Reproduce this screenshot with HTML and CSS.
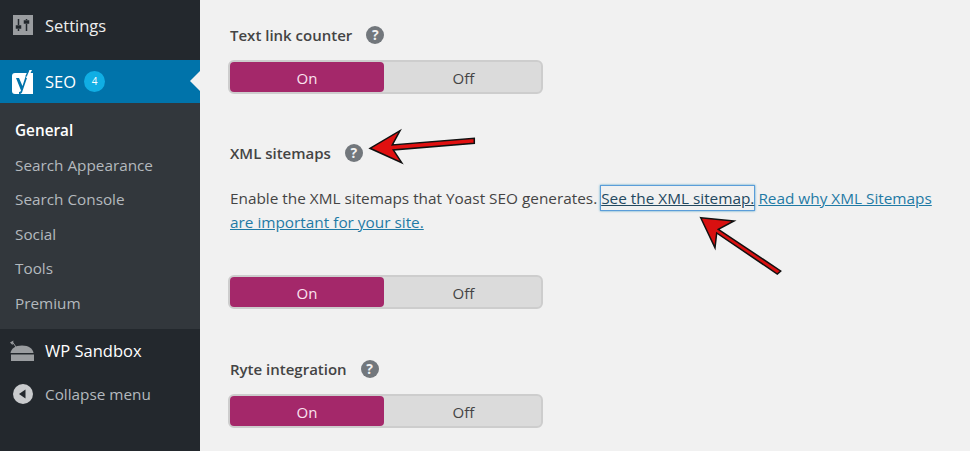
FILE: index.html
```html
<!DOCTYPE html>
<html lang="en">

<head>
    <meta charset="UTF-8">
    <meta name="viewport" content="width=device-width, initial-scale=1.0">
    <title>Yoast SEO - General</title>
    <link rel="stylesheet" href="styles.css">
</head>

<body>
    <div class="page">
        <nav class="sidebar">
            <a class="menu-item menu-settings">
                <svg class="menu-icon" viewBox="0 0 20 20" width="20" height="20">
                    <rect x="0" y="0" width="20" height="20" fill="#9a9da0"/>
                    <path d="M5.500 4v6M5.500 14v2M3.500 11h4v2h-4zM13.500 4v1M13.500 9v7M11.500 6h4v2h-4z" stroke="#23282d" stroke-width="1.500" fill="#23282d"/>
                </svg>
                <span>Settings</span>
            </a>
            <a class="menu-item menu-current">
                <svg class="menu-icon" viewBox="0 0 22 24" width="22" height="24">
                    <path d="M3 3h14l4-0v21H3a3 3 0 0 1-3-3V6a3 3 0 0 1 3-3z" fill="#fff"/>
                    <path d="M4 8h3l3.500 8L14 5h2L10 22.500q-.8 1.500-3 1.500v-2q1.500 0 2-1.500z" fill="#0073aa"/>
                    <path d="M17 0h3l-4 8h-2z" fill="#fff"/>
                    <path d="M16 0h1.500L15 6h-1.500z" fill="#0073aa"/>
                </svg>
                <span>SEO</span>
                <span class="badge">4</span>
                <i class="current-arrow"></i>
            </a>
            <ul class="submenu">
                <li class="submenu-active">General</li>
                <li>Search Appearance</li>
                <li>Search Console</li>
                <li>Social</li>
                <li>Tools</li>
                <li>Premium</li>
            </ul>
            <a class="menu-item menu-sandbox">
                <svg class="menu-icon" viewBox="0 0 24 22" width="24" height="22">
                    <path d="M2.500 6 0 3.500 3.500 1.500z" fill="#9a9da0"/>
                    <path d="M2.500 3 6 8" stroke="#9a9da0" stroke-width="1"/>
                    <path d="M0.500 14c.5-4 4.500-7.500 11.500-7.500S23 10 23.500 14z" fill="#9a9da0"/>
                    <rect x="1" y="15.500" width="23" height="6.500" fill="#9a9da0"/>
                </svg>
                <span>WP Sandbox</span>
            </a>
            <a class="menu-item menu-collapse">
                <svg class="menu-icon" viewBox="0 0 20 20" width="20" height="20">
                    <circle cx="10" cy="10" r="10" fill="#c9cbcd"/>
                    <path d="M12.500 5.500v9L6 10z" fill="#23282d"/>
                </svg>
                <span>Collapse menu</span>
            </a>
        </nav>

        <main class="content">
            <section class="setting setting-links">
                <h4 class="setting-title">Text link counter <i class="help">?</i></h4>
                <div class="toggle"><span class="toggle-on">On</span><span class="toggle-off">Off</span></div>
            </section>

            <section class="setting setting-sitemaps">
                <h4 class="setting-title">XML sitemaps <i class="help">?</i></h4>
                <p class="setting-desc">
                    <span class="desc-line"><span>Enable the XML sitemaps that Yoast SEO generates.</span> <a class="link link-focus">See the XML sitemap.</a> <a class="link">Read why XML Sitemaps</a></span>
                    <span class="desc-line"><a class="link">are important for your site.</a></span>
                </p>
                <div class="toggle"><span class="toggle-on">On</span><span class="toggle-off">Off</span></div>
            </section>

            <section class="setting setting-ryte">
                <h4 class="setting-title">Ryte integration <i class="help">?</i></h4>
                <div class="toggle"><span class="toggle-on">On</span><span class="toggle-off">Off</span></div>
            </section>
        </main>

        <!-- red arrows drawn over the screenshot -->
        <svg class="arrow arrow-help" viewBox="0 0 110 38" width="110" height="38">
            <path d="M3 20.300 33 2.700 25.300 17 107.300 10.300 107.300 15.300 26.300 22 34.700 34.700z" fill="#e01010" stroke="#111" stroke-width="1.500"/>
        </svg>
        <svg class="arrow arrow-link" viewBox="0 0 86 62" width="86" height="62">
            <path d="M2.700 2.700 36 6 20.300 14.300 82.700 56 79.300 59 18.700 18 17 32.700z" fill="#d81010" stroke="#111" stroke-width="1.500"/>
        </svg>
    </div>
</body>

</html>
```

FILE: styles.css
```css
html,
body {
    margin: 0;
    padding: 0;
    height: 100%;
    overflow: hidden;
}

body {
    font-family: "Open Sans", Arial, sans-serif;
    font-size: 15px;
    color: #444;
    background-color: #f1f1f1;
}

.page {
    position: relative;
    display: flex;
    width: 970px;
    height: 451px;
    overflow: hidden;
}

.sidebar {
    flex: 0 0 200px;
    background: #23282d;
    color: #eee;
}

.menu-item {
    display: flex;
    align-items: center;
    position: relative;
    font-size: 16.500px;
    color: #eee;
}

.menu-icon {
    flex: 0 0 auto;
}

.menu-settings {
    height: 60px;
    padding: 0 0 10px 13px;
    box-sizing: border-box;
    gap: 12px;
}

.menu-current {
    height: 43px;
    padding-left: 12px;
    background: #0073aa;
    color: #fff;
    gap: 11px;
}

.badge {
    width: 21px;
    height: 21px;
    margin-left: -3px;
    border-radius: 50%;
    background: #10aee4;
    color: #fff;
    font-size: 10px;
    line-height: 21px;
    text-align: center;
}

.current-arrow {
    position: absolute;
    right: 0;
    top: 11px;
    border: 10px solid transparent;
    border-right-color: #f1f1f1;
    border-left-width: 0;
}

.submenu {
    list-style: none;
    margin: 0;
    padding: 10px 0 8px 15px;
    height: 226px;
    box-sizing: border-box;
    background: #32373c;
    color: #b4b9be;
    font-size: 15.300px;
}

.submenu li {
    height: 34.600px;
    line-height: 34.600px;
}

.submenu-active {
    color: #fff;
    font-weight: 600;
}

.menu-sandbox {
    height: 42px;
    padding-left: 10px;
    gap: 11px;
    color: #fff;
}

.menu-collapse {
    height: 46px;
    padding-left: 13px;
    gap: 12px;
    color: #b4b9be;
    font-size: 15.300px;
}

.content {
    flex: 1;
    padding: 24px 20px 0 30px;
}

.setting-title {
    display: flex;
    align-items: center;
    gap: 14px;
    margin: 0;
    font-size: 15px;
    font-weight: 600;
    line-height: 22px;
    color: #444;
}

.help {
    width: 18px;
    height: 18px;
    border-radius: 50%;
    background: #72777c;
    color: #f1f1f1;
    font-size: 14px;
    font-style: normal;
    font-weight: 700;
    line-height: 18px;
    text-align: center;
}

.toggle {
    display: flex;
    width: 315px;
    height: 34px;
    margin-top: 14px;
    margin-left: -2px;
    border-radius: 6px;
    background: #dbdbdb;
    box-sizing: border-box;
    border: 2px solid #cdcdcd;
    font-size: 15px;
    line-height: 32px;
    text-align: center;
}

.toggle-on {
    width: 154px;
    height: 30px;
    border-radius: 4px;
    background: #a4286a;
    color: #fbe3f0;
}

.toggle-off {
    flex: 1;
    padding-left: 2px;
    color: #444;
}

.setting-sitemaps {
    margin-top: 48px;
}

.setting-desc {
    margin: 22px 0 0;
    font-size: 15.350px;
    line-height: 24px;
    color: #444;
}

.desc-line {
    display: block;
}

.setting-sitemaps .toggle {
    margin-top: 41px;
}

.setting-ryte {
    margin-top: 49px;
}

.link {
    color: #1f7aa5;
    text-decoration: underline;
}

.link-focus {
    color: #23485f;
    box-shadow: 0 0 0 1px #5b9dd9, 0 0 2px 1px rgba(30, 140, 190, .8);
    padding: 2px 0;
}

.arrow {
    position: absolute;
}

.arrow-help {
    left: 367px;
    top: 128px;
}

.arrow-link {
    left: 698px;
    top: 215px;
}
```
